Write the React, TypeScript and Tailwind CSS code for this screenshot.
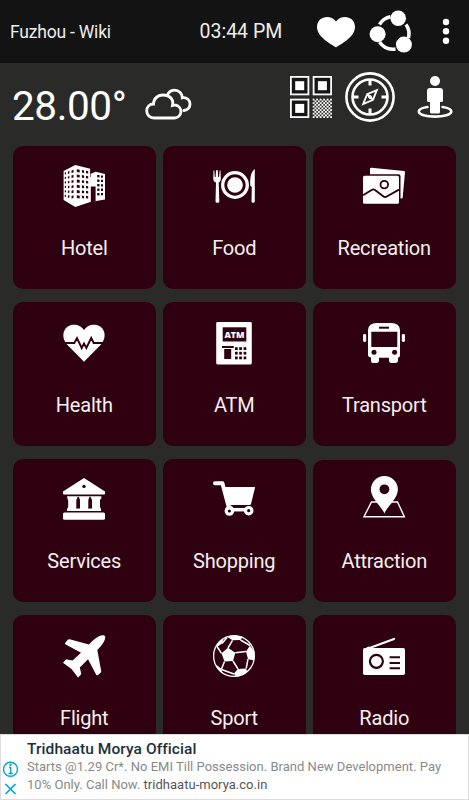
import React from 'react';

const CARD = '#2f000f';

const HotelIcon = () => (
  <>
    <path d="M.6 6 12.3 0 27.3 3.8V9L32.7 6.8 42 9V34.6L27.3 37 12.3 42 .6 35Z" fill="#fff" />
    <path d="M27.8 21.5H32.6V36.3L27.8 37.4Z" fill={CARD} />
    <path d="M27.5 4V12" stroke={CARD} strokeWidth="0.6" fill="none" />
    <g fill={CARD}>
      {[0, 1, 2, 3, 4, 5].map((r) => (
        <React.Fragment key={r}>
          <path d={`M1.8 ${7.6 + r * 4.5}l1.2-.4v2.1l-1.2.3z`} />
          <path d={`M4.9 ${6.6 + r * 4.8}l1.5-.5v2.4l-1.5.4z`} />
          <path d={`M8.5 ${5.4 + r * 5.1}l2-.7v2.7l-2 .5z`} />
          <path d={`M13.8 ${4.2 + r * 5.2}l2.9.5v2.7l-2.9-.3z`} />
          <path d={`M18.9 ${5 + r * 5.1}l2.2.4v2.5l-2.2-.3z`} />
          <path d={`M23 ${5.8 + r * 5}l2.2.4v2.4l-2.2-.3z`} />
        </React.Fragment>
      ))}
      {[0, 1, 2, 3, 4].map((r) => (
        <React.Fragment key={r}>
          <path d={`M34.2 ${10 + r * 4.5}h2.3v2.4h-2.3z`} />
          <path d={`M38 ${10.4 + r * 4.4}h2v2.3h-2z`} />
        </React.Fragment>
      ))}
    </g>
  </>
);

const FoodIcon = () => (
  <>
    <circle cx="22" cy="20" r="12.3" fill="none" stroke="#fff" strokeWidth="3.3" />
    <circle cx="22" cy="20" r="7.8" fill="#fff" />
    <path d="M.5 5.5 1.3 5.2 1.8 12h.9L3 5.2h1.8l.4 6.8h.9L6.7 5.2l.8.3.3 8.500c0 2-1 2.800-2.100 3.500l.6 18.800c0 2-3.700 2-3.800 0l.5-18.800C1.500 17 .3 16 .3 14Z" fill="#fff" />
    <path d="M41.8 4v32.5c0 1.7-3.3 1.7-3.3 0L38.8 22l-1.5-1.2C37 14 37.5 7 41.8 4Z" fill="#fff" />
  </>
);

const RecreationIcon = () => (
  <>
    <path d="M7 3.7Q7.1 2.6 8.4 2.7L41 6.1Q42.2 6.3 42 7.5L39.6 33.3 36 33.8V10H7Z" fill="#fff" />
    <rect x="-.7" y="9.2" width="38.2" height="30.6" rx="2" fill={CARD} />
    <rect x="0" y="10.8" width="36" height="28" rx="1.6" fill="#fff" />
    <circle cx="21.3" cy="19.6" r="3.8" fill="none" stroke={CARD} strokeWidth="1.8" />
    <path d="M0 30.3 8.6 25Q10.3 23.8 12 25L20.2 31.3Q22 32.7 23.8 31.5L36 24.6" fill="none" stroke={CARD} strokeWidth="1.9" />
  </>
);

const HealthIcon = () => (
  <>
    <path d="M21 39.8 4 22.5C-2 16-.5 5.7 7.5 3.3 13 1.8 18.5 4 21 8.2 23.5 4 29 1.8 34.5 3.3 42.5 5.7 44 16 38 22.5Z" fill="#fff" />
    <path d="M0 21H11.3L14 16 18.7 26 21 21.5 23.4 26 28.2 16 30.7 21H42" fill="none" stroke={CARD} strokeWidth="1.9" />
  </>
);

const AtmIcon = () => (
  <>
    <rect x="3.2" y="0" width="35.6" height="42.4" rx="1.4" fill="#fff" />
    <rect x="9.7" y="5.3" width="23.6" height="14.2" fill={CARD} />
    <text x="21.4" y="16" textAnchor="middle" textLength="20" lengthAdjust="spacingAndGlyphs" fill="#fff" className="font-['Open_Sans',sans-serif] text-[9.5px] font-extrabold">ATM</text>
    <g fill={CARD}>
      <path d="M9 24h11.8v2H9z" />
      <path d="M11.2 27h7v10h-7z" />
      {[25.2, 29.8, 34.5].map((y) => (
        <React.Fragment key={y}>
          <rect x="22" y={y} width="2.7" height="2.8" />
          <rect x="26.2" y={y} width="2.7" height="2.8" />
          <rect x="30.6" y={y} width="2.7" height="2.8" />
        </React.Fragment>
      ))}
    </g>
  </>
);

const BusIcon = () => (
  <>
    <path d="M5 8Q5.5 1 14 1H28Q36.5 1 37 8V33.5Q37 35.3 35 35.7V39Q34.7 41 32.5 41H28.5Q26.3 41 26 39V35.7H16V39Q15.7 41 13.5 41H10Q8 41 8 39V35.5Q5 35 5 33.5Z" fill="#fff" />
    <rect x="0" y="12" width="3.2" height="8" rx="1.4" fill="#fff" />
    <rect x="38.8" y="12" width="3.2" height="8" rx="1.4" fill="#fff" />
    <g fill={CARD}>
      <rect x="8.3" y="9.7" width="26" height="15.4" rx=".5" />
      <rect x="16" y="4.7" width="10" height="2" />
      <circle cx="11" cy="30.3" r="2.5" />
      <circle cx="31.6" cy="30.3" r="2.5" />
    </g>
  </>
);

const ServicesIcon = () => (
  <>
    <path d="M21 0 42 13.6V15.8Q42 16.6 41 16.6H1Q0 16.6 0 15.8V13.6Z" fill="#fff" />
    <circle cx="21" cy="8.4" r="1.7" fill={CARD} />
    <path d="M4 18.3H38.3V20.7H37.5L37 22.5V29L38 31V33H4V31L5.2 29V22.5L4.5 20.7Z" fill="#fff" />
    <path d="M14.8 18.8 13.3 22V29.5L12.9 30.5H17.2L17 29.5V22L15.8 18.8ZM26.5 18.8 25.3 22V29.5L24.9 30.5H29.300L29 29.500V22L27.500 18.800Z" fill={CARD} />
    <rect x="0" y="34.4" width="42" height="7.4" rx="1.5" fill="#fff" />
  </>
);

const ShoppingIcon = () => (
  <>
    <path d="M2 5.3H9.4L16 30" fill="none" stroke="#fff" strokeWidth="4" strokeLinecap="round" strokeLinejoin="round" />
    <path d="M11.5 9H41.5Q42.2 9 42 9.7L38 26Q37.7 27 36.7 27H15.5Z" fill="#fff" />
    <path d="M17 27.8 20 30" stroke="#fff" strokeWidth="1.5" />
    <path d="M17 31.7H35" stroke="#fff" strokeWidth="3.5" />
    <circle cx="16.4" cy="33" r="3.2" fill={CARD} stroke="#fff" strokeWidth="3.2" />
    <circle cx="35.7" cy="32.7" r="3.2" fill={CARD} stroke="#fff" strokeWidth="3.2" />
  </>
);

const AttractionIcon = () => (
  <>
    <path d="M8.5 24H34.5L41.4 38.7H.9Z" fill="none" stroke="#fff" strokeWidth="1.4" />
    <path d="M21.4 35.5C19 29 7.9 20.5 7.9 11.5a13.5 13.5 0 0 1 27 0C34.9 20.5 23.8 29 21.4 35.5Z" fill="#fff" />
    <circle cx="21.4" cy="11.3" r="4.9" fill={CARD} />
  </>
);

const FlightIcon = () => (
  <path d="M36 1.300C38.500 0 42.200 -.6 42.300 2 42.300 5 40 9.500 34.300 15L38.200 36Q38.400 37.300 37.300 38L35 40Q33.800 40.800 33.200 39.700L25 24.300 16.800 32.500 18.200 38.500Q18.300 39.500 17.500 40L15 42.400 8.500 34 0 27.800 2.500 25Q3.100 24.200 4 24.400L9.500 25.500 18 17.700 2.300 9.300Q1.500 8.800 2.100 8L4.800 4.800Q5.500 4 6.600 4.200L26 9.500C29 6 32.500 3 36 1.300Z" fill="#fff" />
);

const SportIcon = () => (
  <>
    <circle cx="21" cy="21" r="20.4" fill="none" stroke="#fff" strokeWidth="1.3" />
    <g fill="#fff">
      <path d="M15 12.8 22.3 17.8 20 26 11.5 26.5 8.5 18.3Z" />
      <path d="M14 1.8C19 -.1 25 .1 29.5 2L27.5 5 19.5 5.3Z" />
      <path d="M33 16.5 37 10.5 41 16.5Q42.2 21 40.7 25.5L35 24Z" />
      <path d="M24.8 34 33.2 33.5 34 36.5Q29 41 22.5 41.7L21 38.5Z" />
      <path d="M3.5 10.5Q6.5 5.5 10.5 3.8L9 8.5 4 12Z" />
      <path d="M3 29.5 8.5 34 9.5 38.5Q5 35.5 3 29.5Z" />
    </g>
    <path d="M15 13 19.5 5.3M22.3 17.8 33 16.5M20 26 25 34M11.5 26.5 8.5 34M8.5 18.3 4 11.5M27.5 5 37 10.5M35 24 33.2 33.5M8.5 34.5 21 39M9 8.5 14 2.5" fill="none" stroke="#fff" strokeWidth="1.5" />
  </>
);

const RadioIcon = () => (
  <>
    <path d="M2.5 14.5 31 4" stroke="#fff" strokeWidth="2.2" strokeLinecap="round" />
    <path d="M1 14 5.5 11.5 10 13Z" fill="#fff" />
    <rect x="0" y="13" width="42" height="27" rx="1.8" fill="#fff" />
    <circle cx="13.4" cy="26.3" r="6.5" fill="none" stroke={CARD} strokeWidth="2.2" />
    <path d="M26.6 22.3H37M26.6 28H37M26.6 33.2H37" stroke={CARD} strokeWidth="2" />
  </>
);

const tiles = [
  { label: 'Hotel', icon: HotelIcon },
  { label: 'Food', icon: FoodIcon },
  { label: 'Recreation', icon: RecreationIcon },
  { label: 'Health', icon: HealthIcon },
  { label: 'ATM', icon: AtmIcon },
  { label: 'Transport', icon: BusIcon },
  { label: 'Services', icon: ServicesIcon },
  { label: 'Shopping', icon: ShoppingIcon },
  { label: 'Attraction', icon: AttractionIcon, low: true },
  { label: 'Flight', icon: FlightIcon },
  { label: 'Sport', icon: SportIcon },
  { label: 'Radio', icon: RadioIcon },
];

interface TileProps {
  label: string;
  icon: React.FC;
  low?: boolean;
}

const Tile: React.FC<TileProps> = ({ label, icon: Icon, low }) => (
  <button
    className={`flex flex-col items-center rounded-[10px] bg-[#2f000f] ${
      low ? 'mt-[1.5px] h-[142px] pt-[18px]' : 'h-[143.5px] pt-[19.5px]'
    }`}
  >
    <svg width="42" height="42" viewBox="0 0 42 42" className="shrink-0 overflow-visible">
      <Icon />
    </svg>
    <span className="mt-[29px] text-[20px] leading-6 tracking-[-0.2px] text-[#f4f0f1]">{label}</span>
  </button>
);

const Header = () => (
  <header className="flex h-[63px] shrink-0 items-center bg-[#131313] pl-[10px]">
    <span className="mt-px w-[189.5px] text-[17.5px] tracking-[-0.2px] text-[#eee]">Fuzhou - Wiki</span>
    <span className="mt-px w-[116.5px] text-[19.5px] text-[#eee]">03:44 PM</span>
    <svg width="40" height="34" viewBox="316 13 40 34" fill="#fff">
      <path d="M336 45.3C331 42 317 35 317 25 317 14.5 330 11.5 336 19.5 342 11.5 355 14.5 355 25 355 35 341 42 336 45.3Z" />
    </svg>
    <svg width="44" height="44" viewBox="369 9 44 44" className="ml-[13px]">
      <g fill="none" stroke="#fff" strokeWidth="3.5">
        <path d="M379.5 23.5A16.5 16.5 0 0 1 390.5 15.8" />
        <path d="M406 23.5A16.5 16.5 0 0 1 408.5 37" />
        <path d="M379.5 41A16.5 16.5 0 0 0 395.5 48" />
      </g>
      <g fill="#fff">
        <circle cx="398.2" cy="17.2" r="7.8" />
        <circle cx="377.6" cy="33.2" r="8" />
        <circle cx="403.9" cy="43.6" r="8" />
      </g>
    </svg>
    <svg width="8" height="28" viewBox="442 16 8 28" fill="#fff" className="-mt-[2px] ml-[29px]">
      <circle cx="446" cy="21" r="3.2" />
      <circle cx="446" cy="30.3" r="3.2" />
      <circle cx="446" cy="39.7" r="3.2" />
    </svg>
  </header>
);

const QrIcon = () => (
  <svg width="42" height="42" viewBox="0 0 42 42">
    {[[0, 0], [22.7, 0], [0, 22.7]].map(([x, y]) => (
      <React.Fragment key={`${x}-${y}`}>
        <rect x={x + 0.9} y={y + 0.9} width="17.5" height="17.5" fill="#161616" stroke="#fff" strokeWidth="1.8" />
        <rect x={x + 5.2} y={y + 5.2} width="9" height="9" fill="#fff" />
      </React.Fragment>
    ))}
    {Array.from({ length: 121 }, (_, i) => i)
      .filter((i) => i % 2 === 0)
      .map((i) => (
        <rect key={i} x={22.7 + (i % 11) * 1.75} y={22.7 + Math.floor(i / 11) * 1.75} width="1.85" height="1.85" fill="#fff" />
      ))}
  </svg>
);

const WeatherBar = () => (
  <div className="flex h-[82.5px] shrink-0 items-start pl-[12px]">
    <span className="mt-[19px] w-[132px] text-[40.5px] leading-[48px] tracking-[-0.4px]">28.00°</span>
    <svg width="49" height="34" viewBox="144 87 49 34" fill="none" stroke="#fff" strokeWidth="2.8" strokeLinecap="round" className="mt-[24px]">
      <path d="M154 118H174.5A6.5 6.5 0 0 0 176 105.2C174.5 105 173.5 105.2 172.5 105.5 174 98.5 169 95 163 95 157.5 95 153.5 99 153.5 104 149.5 104 146.7 107 146.7 110.9 146.7 115 150 118 154 118Z" />
      <path d="M168 93.8C170 91 172 90.2 174.5 90.2 179 90.2 182.5 93.5 182.3 97.8 187 97.2 190 100.3 190 104 190 107.5 187.5 110 184 110.5" />
    </svg>
    <div className="ml-[97px] mt-[13px]">
      <QrIcon />
    </div>
    <svg width="50" height="50" viewBox="345 72 50 50" fill="none" stroke="#fff" className="ml-[13px] mt-[9px]">
      <circle cx="370" cy="97" r="23.6" strokeWidth="2.6" />
      <circle cx="370" cy="97" r="17.5" strokeWidth="2.6" />
      <path d="M370 79V85.5M370 108.5V115M352 97H358.5M381.5 97H388" strokeWidth="3" />
      <path d="M376.8 90.2 373 99.8 363.2 104 367.2 94.2ZM367.2 94.2 373 99.8" strokeWidth="1.9" />
      <circle cx="370" cy="97" r="1.5" strokeWidth="1" />
    </svg>
    <svg width="38" height="44" viewBox="416 75 38 44" className="ml-[21px] mt-[12px]">
      <g fill="#fff">
        <circle cx="435" cy="81" r="5" />
        <path d="M427 91Q427 88 430 88H440Q443 88 443 91V100.5Q443 102 441.5 102H440V112Q440 113.5 438.5 113.5H431.5Q430 113.5 430 112V102H428.5Q427 102 427 100.5Z" />
      </g>
      <path d="M427.5 107C422 107.8 418.8 109.5 418.8 111.5 418.8 114.5 426 116.6 435 116.6S451.3 114.5 451.3 111.5C451.3 109.5 448 107.8 442.5 107" fill="none" stroke="#fff" strokeWidth="2.6" strokeLinecap="round" />
    </svg>
  </div>
);

const AdBanner = () => (
  <div className="flex h-[66px] shrink-0 border border-[#dcdcdc] bg-white">
    <svg width="26" height="64" viewBox="1 735 26 64" fill="none" stroke="#00a5d0" strokeWidth="1.4" className="shrink-0">
      <circle cx="10.5" cy="769.3" r="7" />
      <path d="M5.500 784 15.500 794M15.500 784 5.500 794" strokeWidth="1.7" />
      <path d="M9 767.5H10.7V773.5M8.5 773.5H12.8" />
      <circle cx="10.5" cy="764.8" r=".5" />
    </svg>
    <div className="whitespace-nowrap pt-[4px]">
      <div className="text-[15.5px] font-medium leading-5 tracking-[0.08px] text-[#1b303b]">Tridhaatu Morya Official</div>
      <p className="-mt-px text-[13px] leading-[17.5px] tracking-[0.02px] text-[#898989]">
        Starts @1.29 Cr*. No EMI Till Possession. Brand New Development. Pay
        <br />
        10% Only. Call Now. <span className="text-[#555]">tridhaatu-morya.co.in</span>
      </p>
    </div>
  </div>
);

export default function App() {
  return (
    <div className="flex h-[800px] w-[469px] flex-col overflow-hidden bg-[#2a2a29] font-[Roboto,sans-serif] text-white">
      <Header />
      <WeatherBar />
      <main className="min-h-0 flex-1 overflow-hidden">
        <div className="grid grid-cols-[repeat(3,143.5px)] gap-x-[6.5px] gap-y-[13px] pl-[12.5px]">
          {tiles.map((tile) => (
            <Tile key={tile.label} {...tile} />
          ))}
        </div>
      </main>
      <AdBanner />
    </div>
  );
}
